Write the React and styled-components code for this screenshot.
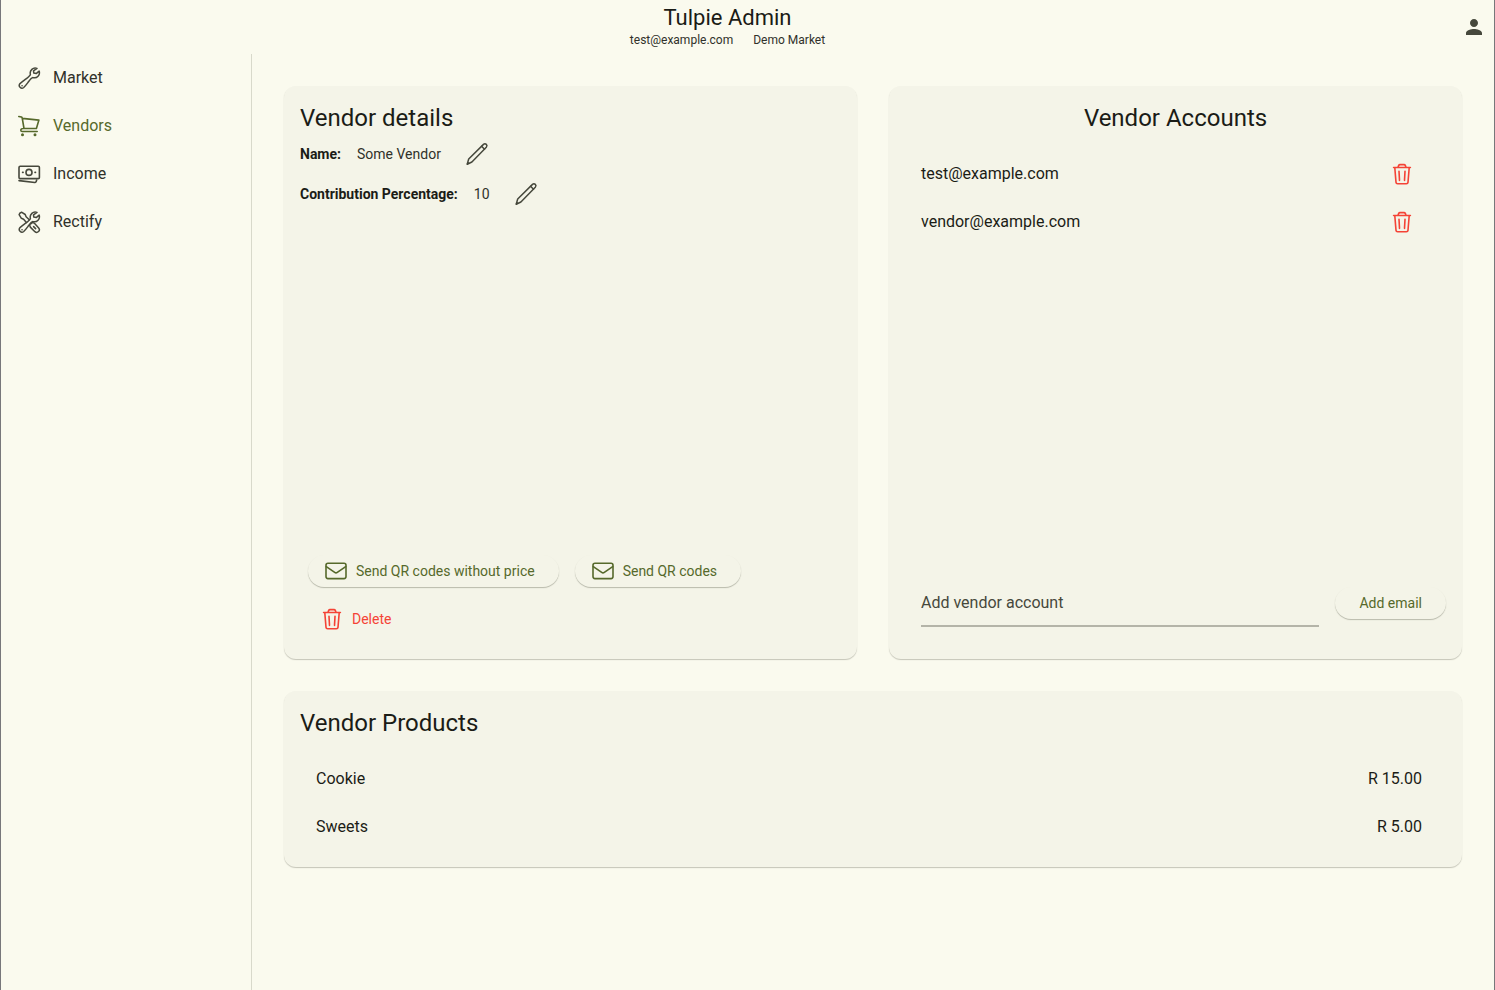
import { useState } from "react";
import styled, { createGlobalStyle } from "styled-components";
import { MdPerson } from "react-icons/md";

const GlobalStyle = createGlobalStyle`
  * {
    box-sizing: border-box;
  }

  body {
    margin: 0;
    background-color: #fafaee;
    color: #1b1c16;
    font-family: Roboto, sans-serif;
    font-size: 16px;
    line-height: 24px;
  }

  h1, h2, p, ul, dl, dd {
    margin: 0;
    padding: 0;
  }

  button, input {
    font-family: inherit;
  }
`;

const Page = styled.div`
  min-height: 100vh;
  display: flex;
  flex-direction: column;
  border: solid #77777a;
  border-width: 0 1px;
`;

const Header = styled.header`
  display: flex;
  align-items: center;
  height: 54px;
`;

const Titles = styled.div`
  flex: 1;
  text-align: center;
  padding-bottom: 2px;
`;

const Title = styled.h1`
  font-size: 22px;
  line-height: 28px;
  font-weight: 400;
`;

const Subtitle = styled.p`
  display: flex;
  justify-content: center;
  gap: 20px;
  font-size: 12px;
  line-height: 16px;
  color: #30312a;
`;

const IconButton = styled.button`
  display: flex;
  align-items: center;
  justify-content: center;
  width: 40px;
  height: 40px;
  padding: 0;
  border: none;
  background: none;
  color: ${(props) => (props.$danger ? "#f44336" : "#46483c")};
  cursor: pointer;
`;

const Body = styled.div`
  flex: 1;
  display: flex;
`;

const Sidebar = styled.nav`
  flex: 0 0 251px;
  border-right: 1px solid #d8d9cb;
`;

const NavLink = styled.a`
  display: flex;
  align-items: center;
  gap: 12px;
  height: 48px;
  padding: 0 16px;
  text-decoration: none;
  color: ${(props) => (props.$active ? "#56692b" : "#30312a")};

  svg {
    color: ${(props) => (props.$active ? "#56692b" : "#46483c")};
  }
`;

const Main = styled.main`
  flex: 1;
  padding: 32px;
`;

const Columns = styled.div`
  display: grid;
  grid-template-columns: 1fr 1fr;
  gap: 32px;
  margin-bottom: 32px;
`;

const Card = styled.section`
  display: flex;
  flex-direction: column;
  padding: 16px;
  border-radius: 12px;
  background-color: #f4f4e8;
  box-shadow: 0 1px 1px rgba(60, 62, 45, 0.28);
  aspect-ratio: ${(props) => (props.$square ? "1" : "auto")};
`;

const CardTitle = styled.h2`
  font-size: 24px;
  line-height: 32px;
  font-weight: 400;
  text-align: ${(props) => (props.$center ? "center" : "left")};
`;

const Detail = styled.div`
  display: flex;
  align-items: center;
  gap: 16px;
  height: 40px;
  font-size: 14px;

  dt {
    font-weight: 700;
  }

  dd {
    color: #30312a;
  }
`;

const Actions = styled.div`
  display: flex;
  flex-wrap: wrap;
  gap: 16px;
  margin-top: auto;
  padding: 8px;
`;

const Break = styled.div`
  flex-basis: 100%;
  display: flex;
`;

const PillButton = styled.button`
  display: flex;
  align-items: center;
  gap: 8px;
  height: 32px;
  padding: 0 24px 0 ${(props) => (props.$icon ? "16px" : "24px")};
  border: none;
  border-radius: 16px;
  background-color: #f4f4e8;
  box-shadow: 0 1px 1px rgba(60, 62, 45, 0.32);
  color: #56692b;
  font-size: 14px;
  white-space: nowrap;
  cursor: pointer;
`;

const DeleteButton = styled(PillButton)`
  padding: 0 16px 0 12px;
  background: none;
  box-shadow: none;
  color: #f44336;
`;

const List = styled.ul`
  list-style: none;
  padding-top: 16px;
`;

const ListRow = styled.li`
  display: flex;
  align-items: center;
  justify-content: space-between;
  height: 48px;
  padding: 0 24px 0 16px;
`;

const AddForm = styled.form`
  display: flex;
  align-items: center;
  gap: 16px;
  margin-top: auto;
  padding: 0 0 16px 16px;
`;

const Field = styled.input`
  flex: 1;
  min-width: 0;
  height: 48px;
  padding: 0;
  border: none;
  border-bottom: 2px solid #b4b4a8;
  background: none;
  font-size: 16px;
  color: #1b1c16;
  outline: none;

  &::placeholder {
    color: #46483c;
    opacity: 1;
  }

  &:focus {
    border-color: #56692b;
  }
`;

function Icon({ children, weight = 1.6 }) {
  return (
    <svg
      width="24"
      height="24"
      viewBox="0 0 24 24"
      fill="none"
      stroke="currentColor"
      strokeWidth={weight}
      strokeLinecap="round"
      strokeLinejoin="round"
      aria-hidden="true"
    >
      {children}
    </svg>
  );
}

const wrenchPath =
  "M20 2.4a5 5 0 0 0-6.6 6c-.4 1.2-2.9 3.3-4.7 4.7-2 1.5-4.1 3-5.7 4.5a2.7 2.7 0 0 0 3.7 3.9c1.7-1.5 3.2-3.6 4.8-5.7 1.4-1.9 3-3.9 4.5-4.2a5 5 0 0 0 6.1-6.5l-2.9 2.5-2.4-.5-.3-2.3z";

function WrenchIcon() {
  return (
    <Icon weight={1.5}>
      <path d={wrenchPath} />
      <path d="M5 19.8h.1" />
    </Icon>
  );
}

function CartIcon() {
  return (
    <Icon>
      <path d="M1.8 2.5 4.4 3c.5.2.7.5.8 1l1.8 10.5M5.3 4.4l16.6 1.7-2.5 8.4H6.2c-1.5 0-2.4.8-2.4 1.7 0 .8.6 1.3 1.4 1.3h15" />
      <circle cx="5.5" cy="20.8" r=".7" fill="currentColor" />
      <circle cx="18" cy="20.8" r=".7" fill="currentColor" />
    </Icon>
  );
}

function CashIcon() {
  return (
    <Icon>
      <rect x="2" y="4.2" width="20.4" height="12.4" rx="1.2" />
      <circle cx="12" cy="10.4" r="3" />
      <path d="M5.6 10.4h.5M18 10.4h.5M2 18.6l15.8 1.9c.7.1 1.2-.3 1.4-.9l.5-1.5" />
    </Icon>
  );
}

function ToolsIcon() {
  return (
    <Icon weight={1.5}>
      <path d={wrenchPath} />
      <path d="M5 19.8h.1M9.4 12.4 6.6 9.2l-2.2-.9-2.3-3.7c.3-1.2 1.2-2.1 2.4-2.4l3.7 2.3.9 2.2 3.2 3M13.7 14l1.6-1.5 1.9.6 4.5 4.8a2.7 2.7 0 0 1-3.8 3.8l-4.6-4.6-.6-1.8M16.6 16.6l2 2" />
    </Icon>
  );
}

function PencilIcon() {
  return (
    <Icon weight={1.5}>
      <path d="m2.2 22.2 1.5-5.2L18.5 2.4c.9-.8 2-.8 2.8 0s.8 1.9 0 2.8L6.9 20l-4.7 2.2z" />
      <path d="m16.6 4.3 2.9 2.9M2.4 22l1-1" />
    </Icon>
  );
}

function TrashIcon() {
  return (
    <Icon>
      <path d="M3.6 5.5h16.8M8 5.2l.6-1.6c.3-.7.7-1 1.4-1h4c.7 0 1.1.3 1.4 1l.6 1.6M4.8 5.7l1.2 14.6c.1.9.7 1.4 1.6 1.4h8.8c.9 0 1.5-.5 1.6-1.4l1.2-14.6M9 9.2l.5 9.2M15 9.2l-.5 9.2" />
    </Icon>
  );
}

function MailIcon() {
  return (
    <Icon>
      <rect x="2" y="4.2" width="20" height="15.4" rx="2" />
      <path d="m2.3 7.6 8.4 5.8c.8.6 1.8.6 2.6 0l8.4-5.8" />
    </Icon>
  );
}

const links = [
  { name: "Market", icon: <WrenchIcon /> },
  { name: "Vendors", icon: <CartIcon /> },
  { name: "Income", icon: <CashIcon /> },
  { name: "Rectify", icon: <ToolsIcon /> },
];

const details = [
  { label: "Name:", value: "Some Vendor" },
  { label: "Contribution Percentage:", value: "10" },
];

const products = [
  { name: "Cookie", price: 15 },
  { name: "Sweets", price: 5 },
];

function App() {
  const [accounts, setAccounts] = useState([
    "test@example.com",
    "vendor@example.com",
  ]);
  const [email, setEmail] = useState("");

  function handleAdd(e) {
    e.preventDefault();
    if (!email) return;
    setAccounts([...accounts, email]);
    setEmail("");
  }

  return (
    <Page>
      <GlobalStyle />
      <Header>
        <Titles>
          <Title>Tulpie Admin</Title>
          <Subtitle>
            <span>test@example.com</span>
            <span>Demo Market</span>
          </Subtitle>
        </Titles>
        <IconButton aria-label="Profile">
          <MdPerson size={24} />
        </IconButton>
      </Header>
      <Body>
        <Sidebar>
          {links.map((link) => (
            <NavLink
              key={link.name}
              href={`#${link.name.toLowerCase()}`}
              $active={link.name === "Vendors"}
            >
              {link.icon}
              {link.name}
            </NavLink>
          ))}
        </Sidebar>
        <Main>
          <Columns>
            <Card $square>
              <CardTitle>Vendor details</CardTitle>
              <dl>
                {details.map((detail) => (
                  <Detail key={detail.label}>
                    <dt>{detail.label}</dt>
                    <dd>{detail.value}</dd>
                    <IconButton aria-label="Edit">
                      <PencilIcon />
                    </IconButton>
                  </Detail>
                ))}
              </dl>
              <Actions>
                <PillButton $icon>
                  <MailIcon /> Send QR codes without price
                </PillButton>
                <PillButton $icon>
                  <MailIcon /> Send QR codes
                </PillButton>
                <Break>
                  <DeleteButton>
                    <TrashIcon /> Delete
                  </DeleteButton>
                </Break>
              </Actions>
            </Card>
            <Card $square>
              <CardTitle $center>Vendor Accounts</CardTitle>
              <List>
                {accounts.map((account) => (
                  <ListRow key={account}>
                    {account}
                    <IconButton
                      $danger
                      aria-label="Remove account"
                      onClick={() =>
                        setAccounts(accounts.filter((a) => a !== account))
                      }
                    >
                      <TrashIcon />
                    </IconButton>
                  </ListRow>
                ))}
              </List>
              <AddForm onSubmit={handleAdd}>
                <Field
                  type="email"
                  aria-label="Add vendor account"
                  placeholder="Add vendor account"
                  value={email}
                  onChange={(e) => setEmail(e.target.value)}
                />
                <PillButton>Add email</PillButton>
              </AddForm>
            </Card>
          </Columns>
          <Card>
            <CardTitle>Vendor Products</CardTitle>
            <List>
              {products.map((product) => (
                <ListRow key={product.name}>
                  <span>{product.name}</span>
                  <span>R {product.price.toFixed(2)}</span>
                </ListRow>
              ))}
            </List>
          </Card>
        </Main>
      </Body>
    </Page>
  );
}

export default App;
